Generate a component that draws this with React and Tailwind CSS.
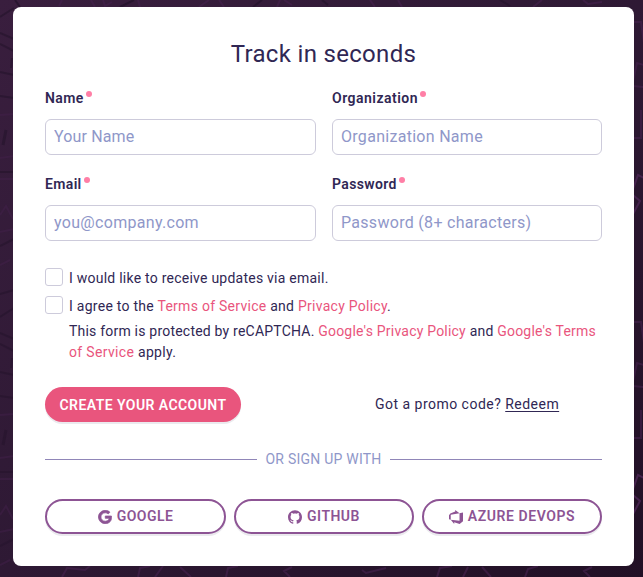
import React from 'react'

function Field({ label, labelClass, placeholder, inputClass, type = 'text' }) {
  return (
    <label className="flex min-w-0 flex-col">
      <span className="flex h-5 items-center gap-[2px] text-sm font-semibold">
        <span className={labelClass}>{label}</span>
        <span className="mb-[8px] size-1.5 rounded-full bg-[#ff7fa6]" />
      </span>
      <input
        type={type}
        placeholder={placeholder}
        className={`mt-[11px] h-9 w-full rounded-md border border-[#cdcbdb] bg-white px-2 pb-px text-base outline-none placeholder:text-[#8f97c9] ${inputClass}`}
      />
    </label>
  )
}

function Link({ children }) {
  return <a href="#" className="text-[#e9557d]">{children}</a>
}

function Checkbox() {
  return <span className="size-[18px] shrink-0 rounded-[3px] border border-[#cdcbdb] bg-white" />
}

function GoogleIcon() {
  return (
    <svg viewBox="0 0 24 24" className="mt-px size-3.5" fill="currentColor" stroke="currentColor" strokeWidth="1.3">
      <path d="M12.48 10.3v4h6.7c-.34 1.54-.753 2.287-1.487 3.033-1.147 1.147-2.733 1.9-5.253 1.9-4.227 0-7.4-3.193-7.4-7.22s3.173-7.22 7.4-7.22c2.2 0 3.907.827 5.107 1.947l2.907-2.907C18.347 1.84 15.933.6 12.48.6 6.067.6.8 5.687.8 12s5.267 11.4 11.68 11.4c3.373 0 6.067-1.173 8.073-3.26 2.06-2.16 2.64-5.013 2.64-7.467 0-.76-.053-1.767-.173-2.373z" />
    </svg>
  )
}

function GithubIcon() {
  return (
    <svg viewBox="0 0 24 24" className="mt-px size-3.5" fill="currentColor">
      <path d="M12 .297c-6.63 0-12 5.373-12 12 0 5.303 3.438 9.8 8.205 11.385.6.113.82-.258.82-.577 0-.285-.01-1.04-.015-2.04-3.338.724-4.042-1.61-4.042-1.61C4.422 18.07 3.633 17.7 3.633 17.7c-1.087-.744.084-.729.084-.729 1.205.084 1.838 1.236 1.838 1.236 1.07 1.835 2.809 1.305 3.495.998.108-.776.417-1.305.76-1.605-2.665-.3-5.466-1.332-5.466-5.93 0-1.31.465-2.38 1.235-3.22-.135-.303-.54-1.523.105-3.176 0 0 1.005-.322 3.3 1.23.96-.267 1.98-.399 3-.405 1.02.006 2.04.138 3 .405 2.28-1.552 3.285-1.23 3.285-1.23.645 1.653.24 2.873.12 3.176.765.84 1.23 1.91 1.23 3.22 0 4.61-2.805 5.625-5.475 5.92.42.36.81 1.096.81 2.22 0 1.606-.015 2.896-.015 3.286 0 .315.21.69.825.57C20.565 22.092 24 17.592 24 12.297c0-6.627-5.373-12-12-12" />
    </svg>
  )
}

function AzureIcon() {
  return (
    <svg viewBox="0 0 24 24" className="mt-px size-3.5" fill="currentColor">
      <path d="M0 8.877L2.247 5.91l8.405-3.416V.022l7.37 5.393L2.966 8.338v8.225L0 15.707zm24-4.45v14.651l-5.753 4.9-9.303-3.057v3.056l-5.978-7.416 15.057 1.798V5.415z" />
    </svg>
  )
}

function ProviderButton({ icon, label, labelClass }) {
  return (
    <button className="flex h-[35px] items-center justify-center gap-[5px] rounded-full border-2 border-[#8d5494] bg-white pb-px text-sm font-semibold text-[#8d5494] shadow-[0_2px_0_rgba(54,45,89,0.1)]">
      {icon}
      <span className={labelClass}>{label}</span>
    </button>
  )
}

/* Faint doodles behind the card, tiled every 300px down the page. */
function Backdrop() {
  return (
    <svg className="absolute inset-0 size-full" viewBox="0 0 643 577" fill="none" strokeWidth="2">
      {[0, 300].map((y) => (
        <g key={y} transform={`translate(0 ${y - 2})`}>
          <g stroke="#28152f" strokeOpacity=".75">
            <path d="M0 19L14 10M0 35L14 41M0 46L14 53M0 74L14 77M12 60L11 70M0 98L14 100M0 174L14 174M0 248L14 241M0 296L14 292" />
            <path d="M6 132L3 147" strokeWidth="3" />
          </g>
          <path stroke="#42204a" strokeOpacity=".5" d="M0 117L14 116M0 160L14 158M0 181L14 181M0 217L6 208L13 221M0 234L14 231M0 267L10 262" />
          <g stroke="#45224d" strokeOpacity=".6">
            <path d="M633 24L641 24L644 45M633 83L637 65L644 67M633 88L644 89M641 112L641 140L633 140" />
            <path strokeOpacity="1" d="M633 191L638 177L644 180M633 197L640 203L633 216" />
          </g>
        </g>
      ))}
      <g stroke="#42204a" strokeOpacity=".75">
        <path d="M59 6L62 0M91 0L95 7M103 0L105 6L112 2M138 0L140 7M199 7L209 0M219 0L224 7M277 7L280 0M284 0L292 5M370 0L375 7M398 0L402 7M533 7L542 0M583 0L588 4L602 2" />
        <path d="M62 577L67 568L85 570L90 566M138 577L140 568L150 566M155 577L163 566M180 567L191 577M226 577L228 568L238 566M292 567L284 571L290 577M362 570L366 573L386 568M437 577L440 568L452 566M463 577L468 567M482 567L491 577M525 577L528 569L538 566M592 567L584 571L590 577" />
      </g>
      <path stroke="#28152f" d="M15 0L20 7M134 0L120 7M253 7L262 0M322 0L328 5M500 0L510 6" />
    </svg>
  )
}

export default function App() {
  return (
    <div className="relative h-[577px] w-[643px] overflow-hidden bg-linear-to-br from-[#391e3e] via-[#2e1934] to-[#211025] pt-[7px] pl-[13px] font-['Roboto',sans-serif] text-[#302754]">
      <Backdrop />
      <main className="relative h-[559px] w-[621px] rounded-lg bg-white px-8 pt-[31px]">
        <h1 className="text-center text-2xl leading-8 font-normal tracking-[0.32px]">Track in seconds</h1>

        <div className="mt-[18px] grid grid-cols-[271px_270px] gap-x-4 gap-y-[19px]">
          <Field label="Name" labelClass="tracking-[0.4px]" placeholder="Your Name" inputClass="tracking-[0.15px]" />
          <Field label="Organization" labelClass="tracking-[0.48px]" placeholder="Organization Name" inputClass="tracking-[0.29px]" />
          <Field label="Email" labelClass="tracking-[0.35px]" placeholder="you@company.com" inputClass="tracking-[0.31px]" />
          <Field label="Password" labelClass="tracking-[0.36px]" placeholder="Password (8+ characters)" inputClass="tracking-[0.3px]" />
        </div>

        <div className="mt-[27px] flex gap-1.5 text-sm leading-5">
          <Checkbox />
          <span className="tracking-[0.24px]">I would like to receive updates via email.</span>
        </div>
        <div className="mt-2 flex gap-1.5 text-sm leading-5">
          <Checkbox />
          <span className="tracking-[0.265px]">
            I agree to the <Link>Terms of Service</Link> and <Link>Privacy Policy</Link>.
          </span>
        </div>
        <p className="mt-[5px] ml-6 text-sm leading-[21px] tracking-[0.21px] whitespace-nowrap">
          This form is protected by reCAPTCHA. <Link>Google's Privacy Policy</Link> and <Link>Google's Terms</Link>
          <br />
          <span className="tracking-[0.33px]">
            <Link>of Service</Link> apply.
          </span>
        </p>

        <div className="mt-6 flex items-center">
          <button className="flex h-[35px] w-[196px] items-center justify-center rounded-full bg-[#e9557d] text-sm font-semibold tracking-[0.43px] text-white shadow-[0_2px_0_rgba(54,45,89,0.1)]">
            CREATE YOUR ACCOUNT
          </button>
          <p className="mb-0.5 ml-[134px] text-sm tracking-[0.48px]">
            Got a promo code? <a href="#" className="underline underline-offset-2">Redeem</a>
          </p>
        </div>

        <div className="mt-[27px] flex h-5 items-center gap-2 text-sm text-[#8f97c9]">
          <span className="mt-px h-px flex-1 bg-[#9086b8]" />
          <span className="tracking-[0.23px]">OR SIGN UP WITH</span>
          <span className="mt-px h-px flex-1 bg-[#9086b8]" />
        </div>

        <div className="mt-[30px] grid grid-cols-[181px_180px_180px] gap-2">
          <ProviderButton icon={<GoogleIcon />} label="GOOGLE" labelClass="tracking-[0.46px]" />
          <ProviderButton icon={<GithubIcon />} label="GITHUB" labelClass="tracking-[0.47px]" />
          <ProviderButton icon={<AzureIcon />} label="AZURE DEVOPS" labelClass="tracking-[0.57px]" />
        </div>
      </main>
    </div>
  )
}
